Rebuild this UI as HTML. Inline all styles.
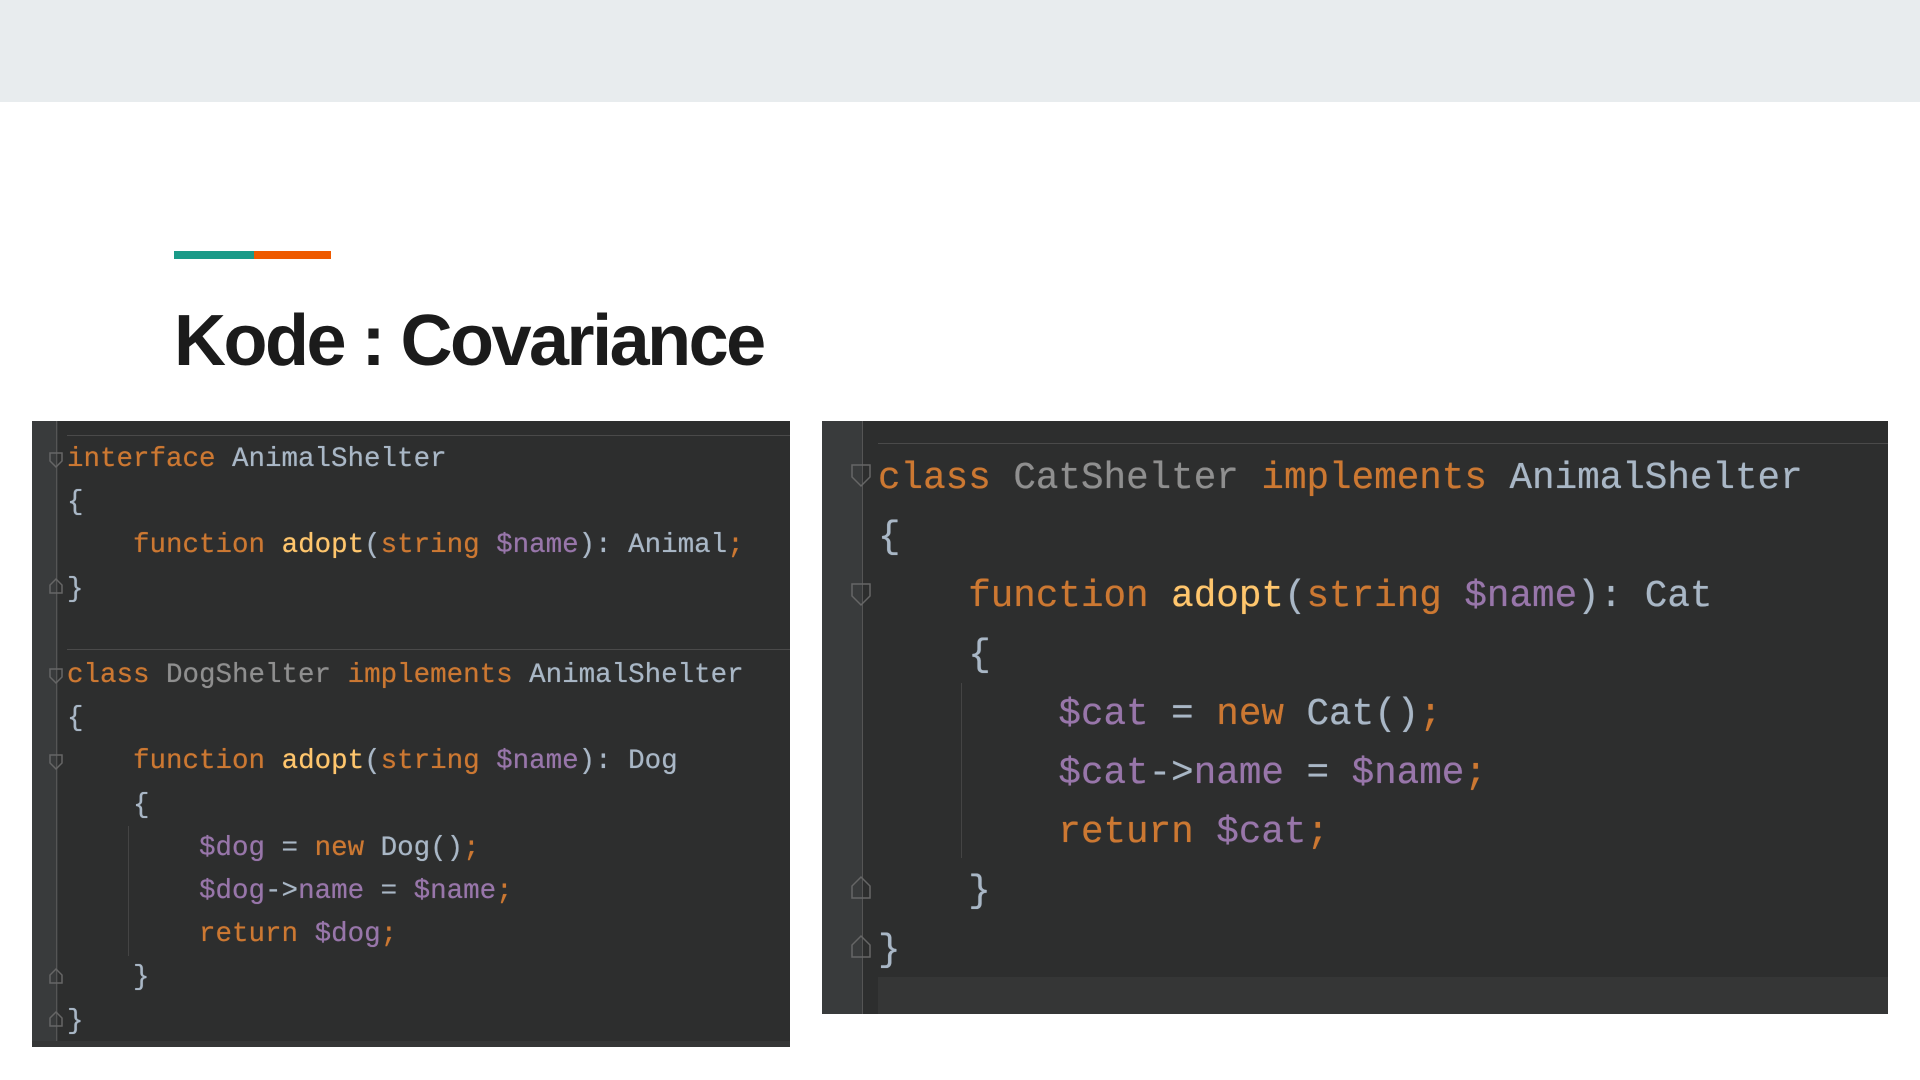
<!DOCTYPE html>
<html><head><meta charset="utf-8">
<style>
html,body{margin:0;padding:0;}
body{width:1920px;height:1080px;background:#fff;position:relative;overflow:hidden;font-family:"Liberation Sans",sans-serif;}
.top{position:absolute;left:0;top:0;width:1920px;height:102px;background:#e8ecee;}
.acc1{position:absolute;left:174px;top:251px;width:80px;height:8px;background:#1a9a88;}
.acc2{position:absolute;left:254px;top:251px;width:77px;height:8px;background:#ee5a00;}
.title{position:absolute;left:174px;top:296px;font-size:72px;font-weight:bold;color:#1b1b1b;letter-spacing:-2.5px;line-height:90px;white-space:nowrap;}
.panel{position:absolute;background:#2d2e2e;overflow:hidden;}
.gut{position:absolute;left:0;top:0;bottom:0;background:#393b3c;}
.gline{position:absolute;top:0;bottom:0;width:1px;background:#555;}
.code{position:absolute;font-family:"Liberation Mono",monospace;white-space:pre;color:#a9b7c6;text-shadow:0 0 0.6px currentColor;}
.k{color:#cc7832}.f{color:#ffc66d}.v{color:#9876aa}.g{color:#8f8f8f}
.sep{position:absolute;height:1px;background:#4a4a4a;right:0;}
.guide{position:absolute;width:1px;background:#444;}
.strip{position:absolute;left:0;right:0;bottom:0;background:#353636;}
svg.fold{position:absolute;}
</style></head><body>
<div class="top"></div>
<div class="acc1"></div><div class="acc2"></div>
<div class="title">Kode : Covariance</div>

<div class="panel" style="left:32px;top:421px;width:758px;height:626px;">
  <div class="gut" style="width:26px;"></div>
  <div class="gline" style="left:24px;"></div>
  <div class="sep" style="left:35px;top:14px;"></div>
  <div class="sep" style="left:35px;top:228px;"></div>
  <div class="guide" style="left:96px;top:405px;height:130px;"></div>
  <div class="strip" style="height:6px;"></div>
  <svg class="fold" style="left:16px;top:28px" width="18" height="600" fill="none" stroke="#666" stroke-width="1.5">
    <path d="M2 4h12v8l-6 6l-6-6z"/>
    <path d="M2 144h12v-8l-6-6l-6 6z"/>
    <path d="M2 220h12v8l-6 6l-6-6z"/>
    <path d="M2 306h12v8l-6 6l-6-6z"/>
    <path d="M2 534h12v-8l-6-6l-6 6z"/>
    <path d="M2 577h12v-8l-6-6l-6 6z"/>
  </svg>
  <div class="code" style="left:35px;top:17px;font-size:27.5px;line-height:43.2px;"><span class="k">interface</span> AnimalShelter
{
    <span class="k">function</span> <span class="f">adopt</span>(<span class="k">string</span> <span class="v">$name</span>): Animal<span class="k">;</span>
}

<span class="k">class</span> <span class="g">DogShelter</span> <span class="k">implements</span> AnimalShelter
{
    <span class="k">function</span> <span class="f">adopt</span>(<span class="k">string</span> <span class="v">$name</span>): Dog
    {
        <span class="v">$dog</span> = <span class="k">new</span> Dog()<span class="k">;</span>
        <span class="v">$dog</span>-><span class="v">name</span> = <span class="v">$name</span><span class="k">;</span>
        <span class="k">return</span> <span class="v">$dog</span><span class="k">;</span>
    }
}</div>
</div>

<div class="panel" style="left:822px;top:421px;width:1066px;height:593px;">
  <div class="gut" style="width:40px;"></div>
  <div class="gline" style="left:40px;"></div>
  <div class="sep" style="left:56px;top:22px;"></div>
  <div class="guide" style="left:139px;top:262px;height:175px;"></div>
  <div class="strip" style="height:37px;left:56px;"></div>
  <svg class="fold" style="left:27px;top:40px" width="26" height="560" fill="none" stroke="#666" stroke-width="1.5">
    <path d="M3 4h18v12l-9 9l-9-9z"/>
    <path d="M3 123h18v12l-9 9l-9-9z"/>
    <path d="M3 437h18v-12l-9-9l-9 9z"/>
    <path d="M3 496h18v-12l-9-9l-9 9z"/>
  </svg>
  <div class="code" style="left:56px;top:29px;font-size:37.6px;line-height:59px;"><span class="k">class</span> <span class="g">CatShelter</span> <span class="k">implements</span> AnimalShelter
{
    <span class="k">function</span> <span class="f">adopt</span>(<span class="k">string</span> <span class="v">$name</span>): Cat
    {
        <span class="v">$cat</span> = <span class="k">new</span> Cat()<span class="k">;</span>
        <span class="v">$cat</span>-><span class="v">name</span> = <span class="v">$name</span><span class="k">;</span>
        <span class="k">return</span> <span class="v">$cat</span><span class="k">;</span>
    }
}</div>
</div>
</body></html>
